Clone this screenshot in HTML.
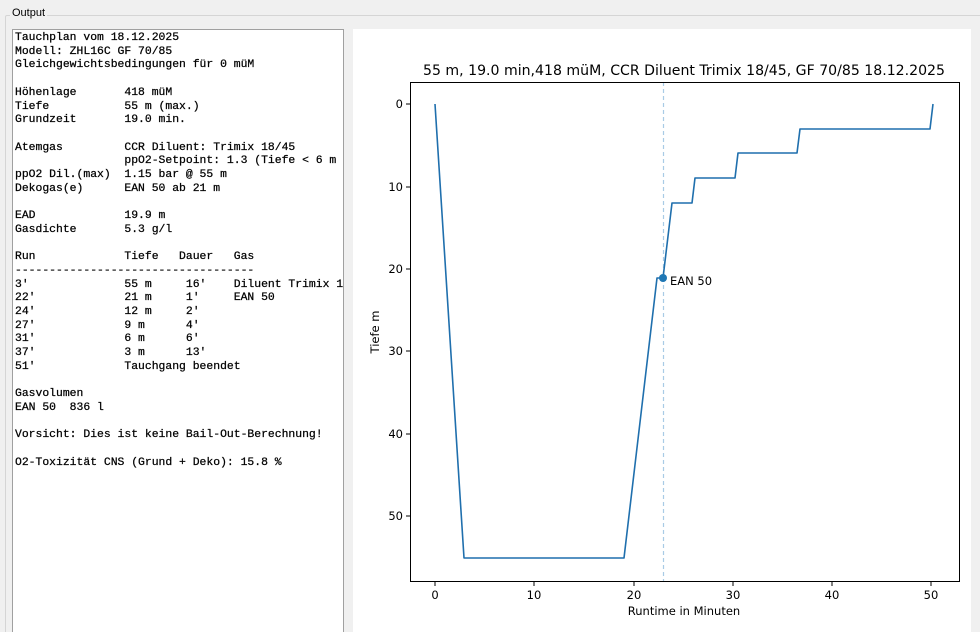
<!DOCTYPE html>
<html><head><meta charset="utf-8"><style>
html,body{margin:0;width:980px;height:632px;overflow:hidden}
body{background:#f0f0f0;position:relative;font-family:"Liberation Sans",sans-serif}
.grp{position:absolute;left:5px;top:15px;width:990px;height:640px;border:1px solid #d5d5d5;border-radius:2px}
.lbl{position:absolute;left:10px;top:7px;background:#f0f0f0;padding:0 2px;font-size:11px;color:#000}
.txt{position:absolute;left:12px;top:29px;width:332px;height:610px;background:#fff;border:1px solid #a0a0a0;box-sizing:border-box}
pre{margin:0;position:absolute;left:2px;top:2px;font-family:"Liberation Mono",monospace;font-size:11.4px;line-height:13.7px;color:#000;white-space:pre;-webkit-text-stroke:0.25px #000}
.plot{position:absolute;left:353px;top:29px;width:618px;height:610px;background:#fff}
svg{position:absolute;left:0;top:0}
</style></head><body>
<div class="grp"></div>
<div class="lbl">Output</div>
<div class="txt"><pre>Tauchplan vom 18.12.2025
Modell: ZHL16C GF 70/85
Gleichgewichtsbedingungen für 0 müM

Höhenlage       418 müM
Tiefe           55 m (max.)
Grundzeit       19.0 min.

Atemgas         CCR Diluent: Trimix 18/45
                ppO2-Setpoint: 1.3 (Tiefe &lt; 6 m
ppO2 Dil.(max)  1.15 bar @ 55 m
Dekogas(e)      EAN 50 ab 21 m

EAD             19.9 m
Gasdichte       5.3 g/l

Run             Tiefe   Dauer   Gas
-----------------------------------
3'              55 m     16'    Diluent Trimix 1
22'             21 m     1'     EAN 50
24'             12 m     2'
27'             9 m      4'
31'             6 m      6'
37'             3 m      13'
51'             Tauchgang beendet

Gasvolumen
EAN 50  836 l

Vorsicht: Dies ist keine Bail-Out-Berechnung!

O2-Toxizität CNS (Grund + Deko): 15.8 %</pre></div>
<div class="plot"></div>
<svg width="980" height="632" font-family="DejaVu Sans,Liberation Sans,sans-serif" font-size="11.5">
<text x="684" y="75" font-size="14" text-anchor="middle" textLength="522" lengthAdjust="spacingAndGlyphs">55 m, 19.0 min,418 müM, CCR Diluent Trimix 18/45, GF 70/85 18.12.2025</text>
<line x1="663.5" y1="82" x2="663.5" y2="581" stroke="#a9cbe6" stroke-width="1.2" stroke-dasharray="4,3"/>
<polyline fill="none" stroke="#1f6fad" stroke-width="1.6" stroke-linejoin="round" points="435,104 464,558 624,558 657,278 663,278 672,203 692,203 695,178 735,178 738,153 797,153 800,129 930,129 933,104"/>
<circle cx="663" cy="278" r="4" fill="#1f77b4"/>
<text x="670" y="285">EAN 50</text>
<rect x="410.5" y="82.5" width="549" height="499" fill="none" stroke="#000" stroke-width="1"/>
<g stroke="#000">
<line x1="406" x2="410" y1="104" y2="104"/><line x1="406" x2="410" y1="187" y2="187"/><line x1="406" x2="410" y1="269" y2="269"/><line x1="406" x2="410" y1="351" y2="351"/><line x1="406" x2="410" y1="434" y2="434"/><line x1="406" x2="410" y1="516" y2="516"/>
<line y1="582" y2="586" x1="435" x2="435"/><line y1="582" y2="586" x1="534" x2="534"/><line y1="582" y2="586" x1="634" x2="634"/><line y1="582" y2="586" x1="733" x2="733"/><line y1="582" y2="586" x1="832" x2="832"/><line y1="582" y2="586" x1="931" x2="931"/>
</g>
<g text-anchor="end">
<text x="403" y="108">0</text><text x="403" y="191">10</text><text x="403" y="273">20</text><text x="403" y="355">30</text><text x="403" y="438">40</text><text x="403" y="520">50</text>
</g>
<g text-anchor="middle">
<text x="435" y="599">0</text><text x="534" y="599">10</text><text x="634" y="599">20</text><text x="733" y="599">30</text><text x="832" y="599">40</text><text x="931" y="599">50</text>
<text x="684" y="615">Runtime in Minuten</text>
<text transform="translate(379,332) rotate(-90)">Tiefe m</text>
</g>
</svg>
</body></html>
